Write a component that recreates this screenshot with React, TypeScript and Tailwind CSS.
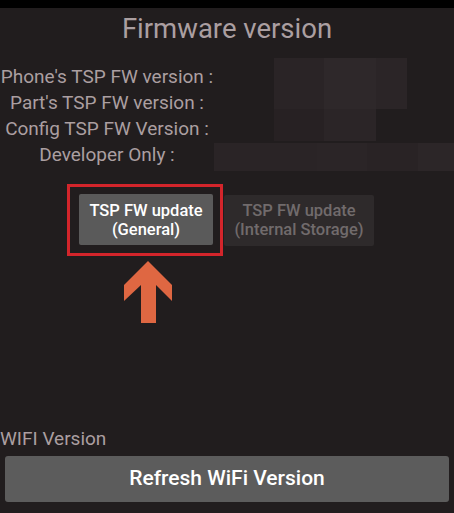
import React from 'react'

const labels = [
  "Phone's TSP FW version :",
  "Part's TSP FW version :",
  'Config TSP FW Version :',
  'Developer Only :',
]

// redaction mosaic over the version values
const mosaic = [
  {x: 274, y: 58, w: 50, h: 51, c: '#2a2426'},
  {x: 324, y: 58, w: 52, h: 51, c: '#2e282a'},
  {x: 376, y: 58, w: 31, h: 51, c: '#2b2527'},
  {x: 274, y: 109, w: 50, h: 32, c: '#272123'},
  {x: 324, y: 109, w: 52, h: 32, c: '#2b2527'},
  {x: 214, y: 143, w: 103, h: 28, c: '#2a2426'},
  {x: 317, y: 143, w: 50, h: 28, c: '#2b2527'},
  {x: 367, y: 143, w: 51, h: 28, c: '#292325'},
  {x: 418, y: 143, w: 36, h: 28, c: '#2c2628'},
]

export default function App() {
  return (
    <div
      className="relative w-[454px] h-[513px] overflow-hidden bg-[#211d1e]"
      style={{fontFamily: 'Roboto, "Noto Sans", sans-serif'}}
    >
      <div className="h-[8px] bg-black" />

      <div className="h-[42px] flex items-center justify-center text-[27.5px] text-[#ab9fa1]">
        Firmware version
      </div>

      <div className="mt-[14px] flex flex-col">
        {labels.map((l) => (
          <div key={l} className="flex h-[26px] items-center">
            <div className="w-[214px] text-center text-[19px] text-[#ab9fa1] whitespace-nowrap">{l}</div>
          </div>
        ))}
      </div>

      {mosaic.map((m, i) => (
        <div
          key={i}
          className="absolute"
          style={{left: m.x, top: m.y, width: m.w, height: m.h, background: m.c}}
        />
      ))}

      <div className="mt-[16px] ml-[67px] flex items-center">
        <div className="border-[3px] border-[#d3252b] pl-[9px] pr-[7px] pt-[7px] pb-[8px]">
          <div className="w-[134px] h-[51px] rounded-[2px] bg-[#5a5a5a] flex flex-col items-center justify-center text-[16.5px] leading-[19px] font-medium text-white whitespace-nowrap">
            <span>TSP FW update</span>
            <span>(General)</span>
          </div>
        </div>
        <div className="ml-[1px] w-[150px] h-[51px] rounded-[2px] bg-[#2e2a2b] flex flex-col items-center justify-center text-[16.5px] leading-[19px] font-medium text-[#716b6c] whitespace-nowrap">
          <span>TSP FW update</span>
          <span>(Internal Storage)</span>
        </div>
      </div>

      <svg className="ml-[123px] mt-[4px] block" width="50" height="63" viewBox="123 259 50 63">
        <polygon
          points="148,260 172,284 172,300 156,284 156,322 141,322 141,284 124,300 124,284"
          fill="#df6742"
        />
      </svg>

      <div className="mt-[104px] h-[24px] flex items-center text-[19px] text-[#ab9fa1]">WIFI Version</div>

      <div className="mt-[5px] mx-[5px] h-[46px] rounded-[3px] bg-[#5c5c5c] flex items-center justify-center text-[21px] font-medium text-white">
        Refresh WiFi Version
      </div>
    </div>
  )
}
